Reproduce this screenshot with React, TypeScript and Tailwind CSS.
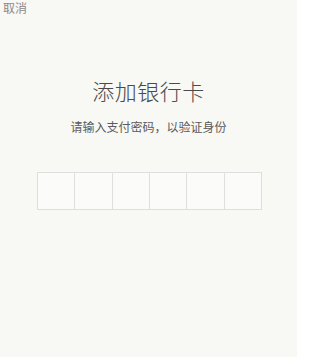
import React from 'react';

const App: React.FC = () => {
  const cells = [0, 1, 2, 3, 4, 5];
  return (
    <div
      className="w-[297px] h-[357px] bg-[#f8f8f5] flex flex-col"
      style={{ fontFamily: '"Noto Sans CJK SC", "Noto Sans", sans-serif' }}
    >
      <div className="pl-[3px] pt-[1px] text-[12px] leading-[14px] text-[#8a8a8a]">取消</div>
      <h1 className="mt-[62px] text-center text-[22px] leading-[26px] font-light text-[#4a4a4a] tracking-[0.5px]">
        添加银行卡
      </h1>
      <p className="mt-[17px] text-center text-[12px] leading-[14px] text-[#5a5a5a]">
        请输入支付密码，以验证身份
      </p>
      <div className="mt-[38px] ml-[37px] w-[225px] h-[38px] flex border border-[#dededc] bg-[#fbfbf9]">
        {cells.map((i) => (
          <div
            key={i}
            className={`flex-1 ${i < 5 ? 'border-r border-[#e0e0de]' : ''}`}
          />
        ))}
      </div>
    </div>
  );
};

export default App;
